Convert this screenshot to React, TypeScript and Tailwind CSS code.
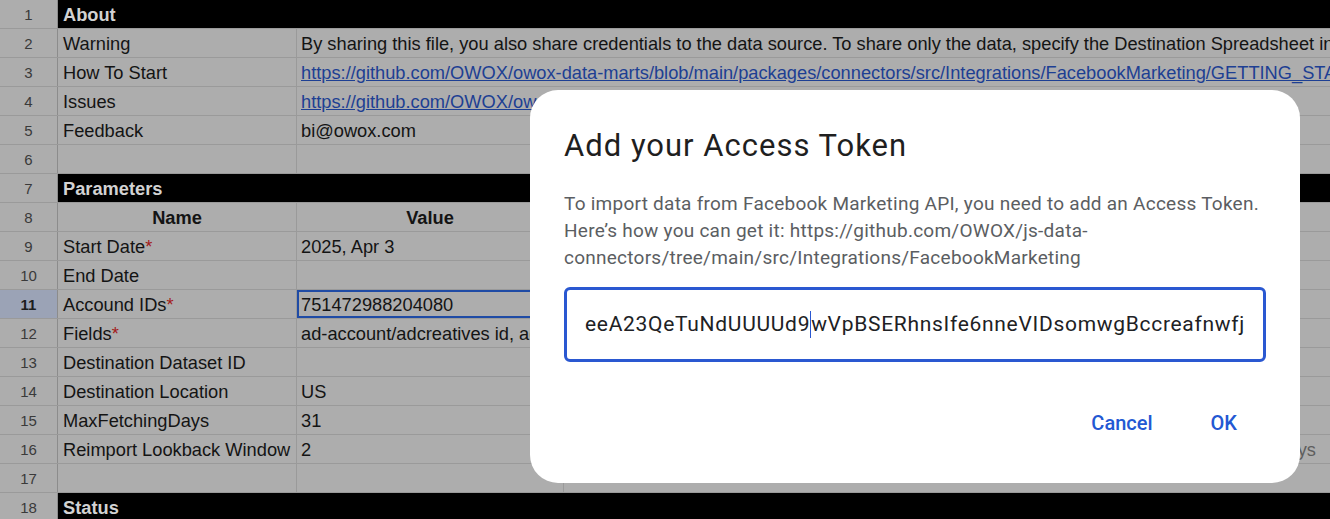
import React from "react";

type Row = {
  n: number;
  kind?: "section" | "head";
  a?: string;
  b?: string;
  c?: string;
  req?: boolean;
  link?: boolean;
  spill?: boolean;
  selected?: boolean;
};

const rows: Row[] = [
  { n: 1, kind: "section", a: "About" },
  {
    n: 2,
    a: "Warning",
    b: "By sharing this file, you also share credentials to the data source. To share only the data, specify the Destination Spreadsheet in the settings",
    spill: true,
  },
  {
    n: 3,
    a: "How To Start",
    b: "https://github.com/OWOX/owox-data-marts/blob/main/packages/connectors/src/Integrations/FacebookMarketing/GETTING_STARTED.md",
    link: true,
    spill: true,
  },
  { n: 4, a: "Issues", b: "https://github.com/OWOX/owox-data-marts/issues", link: true, spill: true },
  { n: 5, a: "Feedback", b: "bi@owox.com" },
  { n: 6 },
  { n: 7, kind: "section", a: "Parameters" },
  { n: 8, kind: "head", a: "Name", b: "Value", c: "Comment" },
  { n: 9, a: "Start Date", req: true, b: "2025, Apr 3" },
  { n: 10, a: "End Date" },
  { n: 11, a: "Accound IDs", req: true, b: "751472988204080", selected: true },
  { n: 12, a: "Fields", req: true, b: "ad-account/adcreatives id, ad-account/adcreatives name", spill: true },
  { n: 13, a: "Destination Dataset ID" },
  { n: 14, a: "Destination Location", b: "US" },
  { n: 15, a: "MaxFetchingDays", b: "31" },
  { n: 16, a: "Reimport Lookback Window", b: "2", c: "Number of days to re-import data for, to catch late updates in the last days" },
  { n: 17 },
  { n: 18, kind: "section", a: "Status" },
];

function SheetRow({ r }: { r: Row }) {
  const num = (
    <div
      className={`w-[58px] shrink-0 border-r border-[#8c8c8c] flex items-center justify-center pt-[2px] text-[15px] ${
        r.selected ? "bg-[#9ba3b6] font-bold text-[#1e1e1e]" : "text-[#3a3a3a]"
      }`}
    >
      {r.n}
    </div>
  );

  if (r.kind === "section") {
    return (
      <div className="flex h-[29px] border-b border-[#9a9a9a]">
        {num}
        <div className="flex-1 bg-black flex items-center pt-[2px] px-[5px] text-[18.25px] font-bold text-[#d2d2d2]">{r.a}</div>
      </div>
    );
  }

  const head = r.kind === "head";
  return (
    <div className="flex h-[29px] border-b border-[#9a9a9a] text-[18.25px] text-[#141414]">
      {num}
      <div
        className={`w-[239px] shrink-0 border-r border-[#9a9a9a] flex items-center pt-[2px] px-[5px] whitespace-nowrap ${
          head ? "justify-center font-bold" : ""
        }`}
      >
        {r.a}
        {r.req && <span className="text-[#a31a1a]">*</span>}
      </div>
      <div
        className={`w-[267px] shrink-0 flex items-center pt-[2px] px-[4px] whitespace-nowrap ${
          r.spill ? "" : "border-r border-[#9a9a9a]"
        } ${head ? "justify-center font-bold" : ""} ${r.selected ? "shadow-[inset_0_0_0_2px_#1f4ba5]" : ""}`}
      >
        {r.link ? <span className="text-[#1d3f93] underline">{r.b}</span> : r.b}
      </div>
      <div className="flex-1 min-w-0 flex items-center justify-end pt-[2px] pr-[14px] whitespace-nowrap overflow-hidden text-[#5e5e5e]">
        {!head && r.c}
      </div>
    </div>
  );
}

function TokenDialog() {
  const before = "eeA23QeTuNdUUUUd9";
  const after = "wVpBSERhnsIfe6nneVIDsomwgBccreafnwfj";
  return (
    <div className="absolute left-[530px] top-[90px] w-[770px] h-[393px] bg-white rounded-[28px] px-[34px] font-['Roboto',sans-serif]">
      <h2 className="mt-[36px] text-[31px] leading-[40px] tracking-[1px] text-[#1f1f1f]">Add your Access Token</h2>
      <p className="mt-[24px] text-[19px] leading-[27px] tracking-[0.25px] text-[#5b5e62]">
        To import data from Facebook Marketing API, you need to add an Access Token.
        <br />
        Here’s how you can get it: https://github.com/OWOX/js-data-
        <br />
        connectors/tree/main/src/Integrations/FacebookMarketing
      </p>
      <div className="mt-[16px] h-[75px] border-[3px] border-[#2a58d1] rounded-[6px] flex items-center px-[18px] text-[21px] tracking-[0.7px] text-[#202124] whitespace-nowrap overflow-hidden">
        <span>{before}</span>
        <span className="inline-block w-0 h-[27px] border-l border-[#2a58d1]" />
        <span>{after}</span>
      </div>
      <div className="mt-[37px] flex justify-end">
        <button className="h-[48px] px-[29px] text-[20px] font-medium text-[#2358d3]">Cancel</button>
        <button className="h-[48px] px-[29px] text-[20px] font-medium text-[#2358d3]">OK</button>
      </div>
    </div>
  );
}

export default function App() {
  return (
    <div className="relative w-[1330px] h-[519px] overflow-hidden bg-[#adadad] font-['Liberation_Sans',Arial,sans-serif]">
      {rows.map((r) => (
        <SheetRow key={r.n} r={r} />
      ))}
      <TokenDialog />
    </div>
  );
}
